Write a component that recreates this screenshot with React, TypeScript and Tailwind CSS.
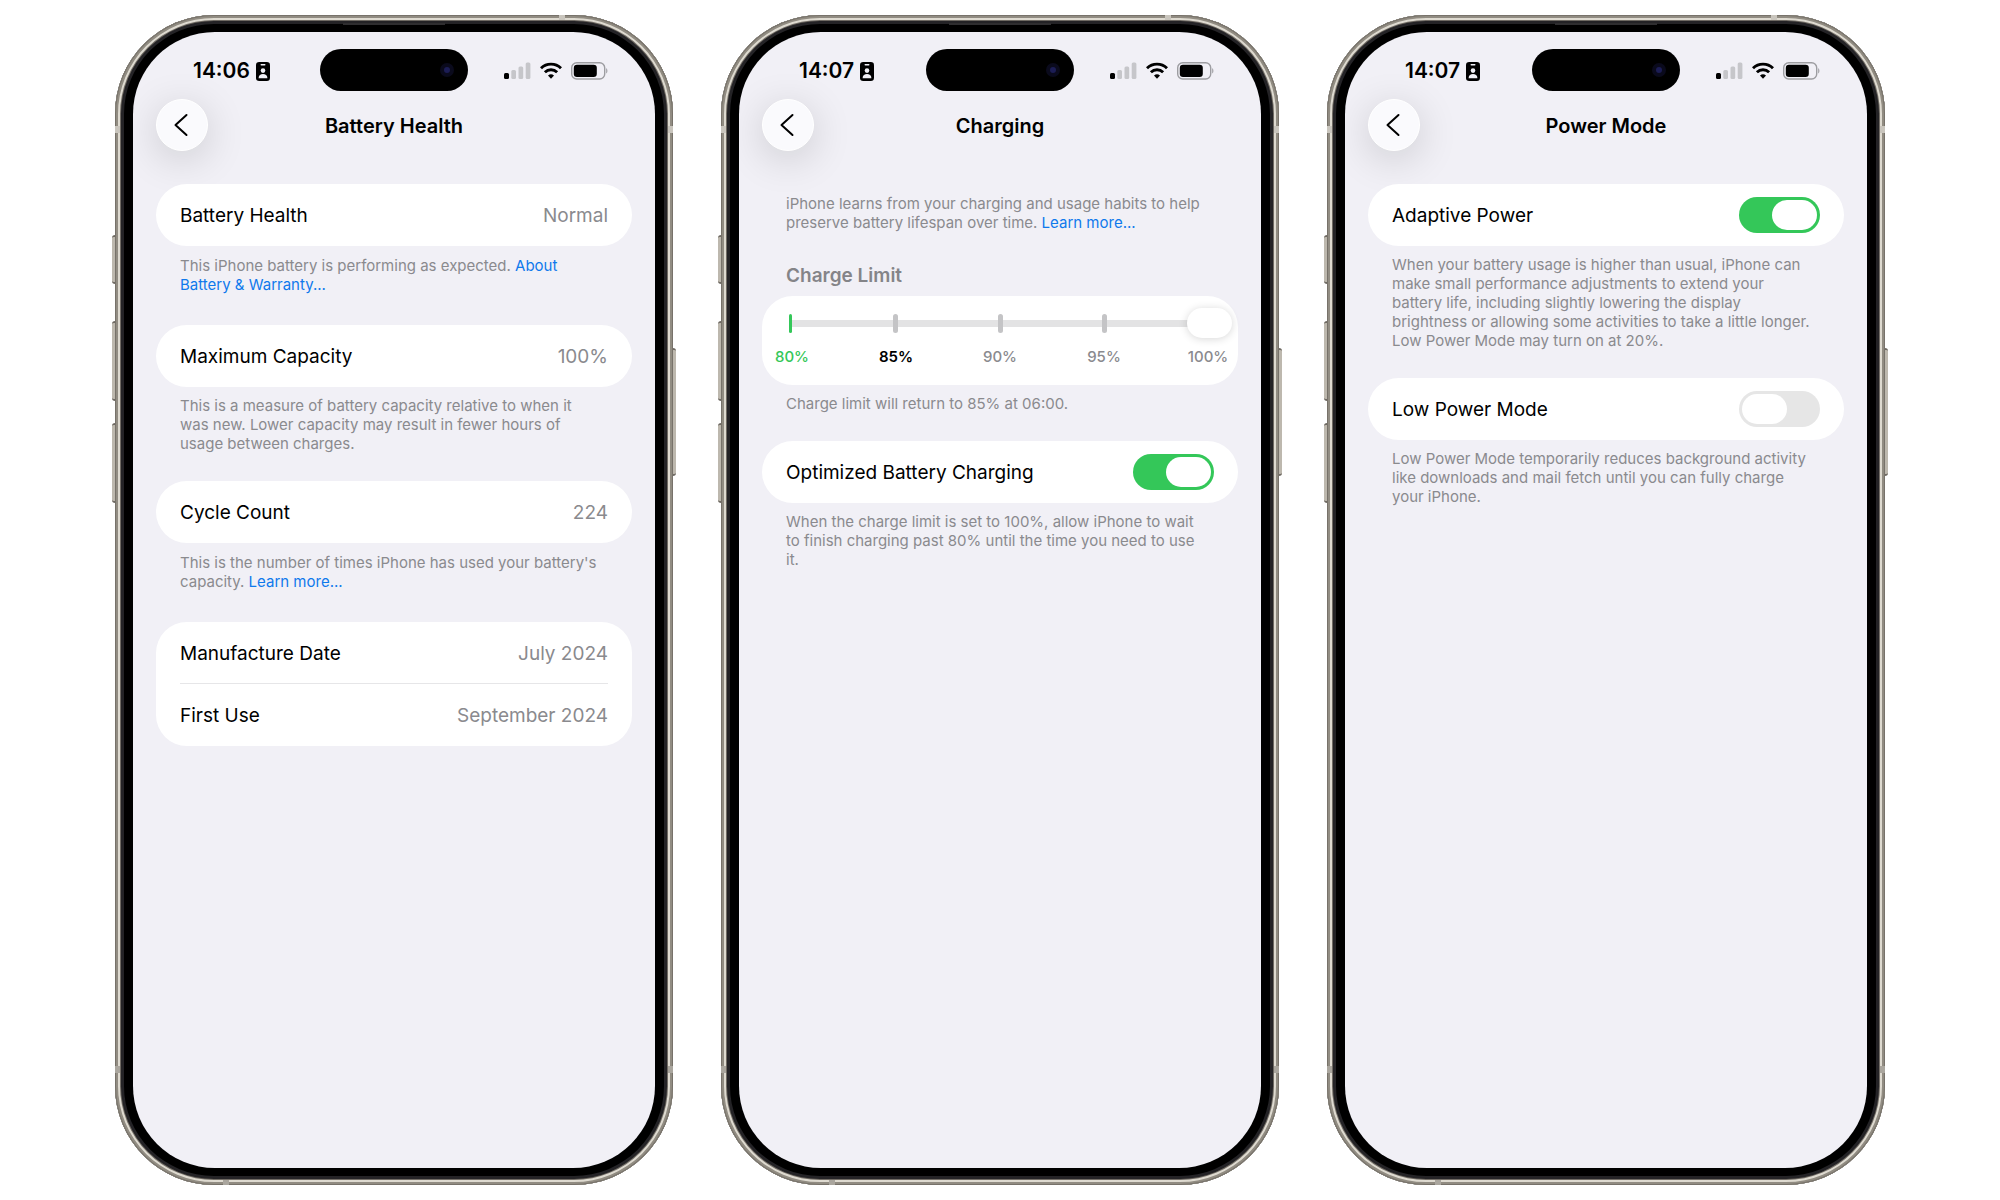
import { FC, ReactNode, useId, useState } from 'react';

const StatusBar: FC<{ time: string }> = ({ time }) => (
  <div className="mt-[17px] grid h-[42px] grid-cols-[1fr_148px_1fr] items-center">
    <div className="flex items-center gap-[6px] pt-[2px] pl-[60px]">
      <span className="text-[21px] leading-6 font-semibold">{time}</span>
      <svg width="14" height="19" viewBox="0 0 14 19" aria-hidden="true">
        <rect width="14" height="19" rx="3.2" fill="#000" />
        <rect x="4.5" y="2" width="5" height="1.6" rx="0.8" fill="#f1f0f6" />
        <circle cx="7" cy="8.6" r="2.3" fill="#f1f0f6" />
        <path d="M2.6 16.2c0-3 2-4.2 4.4-4.2s4.4 1.2 4.4 4.2z" fill="#f1f0f6" />
      </svg>
    </div>
    <div className="flex h-[42px] items-center justify-end rounded-full bg-black pr-[14px]">
      <span className="flex size-[14px] items-center justify-center rounded-full bg-[#0a0a1c]">
        <span className="size-[6px] rounded-full bg-[#1c1d55]" />
      </span>
    </div>
    <div className="flex items-center justify-end gap-[9px] pt-px pr-[47px]">
      <svg width="27" height="18" viewBox="0 0 27 18" aria-hidden="true">
        <rect x="0" y="11" width="5" height="6" rx="1.5" fill="#000" />
        <rect x="7.3" y="8" width="4.7" height="9" rx="1.5" fill="#c6c6ca" />
        <rect x="14.5" y="4.5" width="4.7" height="12.5" rx="1.5" fill="#c6c6ca" />
        <rect x="21.7" y="0.5" width="4.7" height="16.5" rx="1.5" fill="#c6c6ca" />
      </svg>
      <svg width="22" height="17" viewBox="0 0 22 17" fill="none" stroke="#000" strokeWidth="2.9" aria-hidden="true">
        <path d="M1 6.200a14.300 14.300 0 0 1 20 0" />
        <path d="M4.900 10.200a8.700 8.700 0 0 1 12.200 0" />
        <path d="M11 16.700l-3-3.100a4.300 4.300 0 0 1 6 0z" fill="#000" stroke="none" />
      </svg>
      <svg width="37" height="18" viewBox="0 0 37 18" aria-hidden="true">
        <rect x="0.7" y="0.7" width="33" height="16.3" rx="5" fill="none" stroke="#9d9da1" strokeWidth="1.4" />
        <rect x="2.8" y="2.8" width="23" height="12.1" rx="3.2" fill="#000" />
        <path d="M35.2 6.300c1.600.5 1.600 4.700 0 5.200z" fill="#9d9da1" />
      </svg>
    </div>
  </div>
);

const Phone: FC<{ time: string; title: string; children: ReactNode }> = ({ time, title, children }) => (
  <section className="relative flex rounded-[99px] bg-black px-[18px] py-[17px] shadow-[inset_0_0_0_1px_#77726a,inset_0_0_0_3px_#918c82,inset_0_0_0_5px_#dedad0,inset_0_0_0_6px_#6f6a63,inset_0_0_0_9px_#242326]">
    {/* side keys */}
    <span className="absolute top-[220px] -left-[3px] h-[49px] w-[3px] rounded-l-sm border-y-2 border-[#6f6a63] bg-[#bdb8ae]" />
    <span className="absolute top-[306px] -left-[3px] h-[80px] w-[3px] rounded-l-sm border-y-2 border-[#6f6a63] bg-[#bdb8ae]" />
    <span className="absolute top-[408px] -left-[3px] h-[80px] w-[3px] rounded-l-sm border-y-2 border-[#6f6a63] bg-[#bdb8ae]" />
    <span className="absolute top-[333px] -right-[3px] h-[128px] w-[3px] rounded-r-sm border-y-2 border-[#6f6a63] bg-[#bdb8ae]" />
    {/* antenna bands */}
    <span className="absolute top-[111px] left-0 h-[7px] w-[5px] bg-[#c9c5bd]" />
    <span className="absolute top-[111px] right-0 h-[7px] w-[5px] bg-[#c9c5bd]" />
    <span className="absolute bottom-[112px] left-0 h-[7px] w-[5px] bg-[#aaa69e]" />
    <span className="absolute right-0 bottom-[112px] h-[7px] w-[5px] bg-[#aaa69e]" />
    <span className="absolute top-0 right-[108px] h-[5px] w-[6px] bg-[#c9c5bd]" />
    <span className="absolute bottom-0 left-[108px] h-[5px] w-[6px] bg-[#aaa69e]" />
    {/* earpiece */}
    <span className="absolute inset-x-[228px] top-[8px] h-[2px] bg-[#2f2e30]" />

    <div className="flex w-full flex-col overflow-hidden rounded-[82px] bg-[#f1f0f6] text-black">
      <StatusBar time={time} />
      <header className="mx-[23px] mt-2 grid grid-cols-[52px_1fr_52px] items-center">
        <button
          type="button"
          aria-label="Back"
          className="flex size-[52px] items-center justify-center rounded-full border border-white bg-[#fafafd] pr-[3px] shadow-[0_8px_40px_rgba(0,0,0,0.16)]"
        >
          <svg width="14" height="24" viewBox="0 0 14 24" fill="none" stroke="#000" strokeWidth="2" strokeLinecap="round" strokeLinejoin="round" aria-hidden="true">
            <path d="M12.500 2L1.500 12l11 10" />
          </svg>
        </button>
        <h1 className="pt-[2px] text-center text-[20px] leading-6 font-semibold">{title}</h1>
      </header>
      <div className="mx-[23px] mt-[33px]">{children}</div>
    </div>
  </section>
);

const Card: FC<{ children: ReactNode }> = ({ children }) => (
  <div className="rounded-[31px] bg-white px-6">{children}</div>
);

const Row: FC<{ label: string; value: string }> = ({ label, value }) => (
  <div className="flex h-[62px] items-center justify-between pt-[2px] text-[19px] leading-6">
    <span>{label}</span>
    <span className="text-[#8a8a8e]">{value}</span>
  </div>
);

const SwitchRow: FC<{ label: string; on?: boolean }> = ({ label, on = false }) => {
  const id = useId();
  const [checked, setChecked] = useState(on);

  return (
    <div className="flex h-[62px] items-center justify-between">
      <label htmlFor={id} className="pt-[2px] text-[19px] leading-6">
        {label}
      </label>
      <input
        id={id}
        type="checkbox"
        role="switch"
        checked={checked}
        onChange={(e) => setChecked(e.target.checked)}
        className="h-[36px] w-[81px] appearance-none rounded-full bg-[#e6e6e6] p-[3px] before:block before:h-[30px] before:w-[45px] before:rounded-full before:bg-white checked:bg-[#34c759] checked:before:translate-x-[30px]"
      />
    </div>
  );
};

const Note: FC<{ children: ReactNode }> = ({ children }) => (
  <p className="px-6 pt-[9px] pb-7 text-[15px] leading-[19px] text-[#8a8a8e]">{children}</p>
);

const LinkNote: FC<{ children: ReactNode }> = ({ children }) => (
  <p className="px-6 pt-[10px] pb-[31px] text-[15px] leading-[19px] text-[#8a8a8e]">{children}</p>
);

const Link: FC<{ children: ReactNode }> = ({ children }) => (
  <a href="#" className="text-[#0f79ec]">
    {children}
  </a>
);

const LIMITS = [
  { value: 80, color: 'text-[#34c759] font-medium' },
  { value: 85, color: 'text-black font-semibold' },
  { value: 90, color: 'text-[#8a8a8e] font-medium' },
  { value: 95, color: 'text-[#8a8a8e] font-medium' },
  { value: 100, color: 'text-[#8a8a8e] font-medium' },
];

const ChargeLimit: FC = () => {
  const [limit, setLimit] = useState(100);

  return (
    <div className="rounded-[31px] bg-white px-[6px] pt-[12px] pb-[19px]">
      <div className="grid items-center">
        <div className="col-start-1 row-start-1 mr-[20px] ml-[22px] h-[7px] bg-[#e3e3e4]" />
        <div className="col-start-1 row-start-1 mr-[20px] ml-[20px] flex justify-between">
          {LIMITS.map(({ value }) => (
            <span key={value} className="flex h-[19px] w-[5px] justify-center">
              <span className={value === 80 ? 'w-[3px] rounded-full bg-[#34c759]' : 'w-[5px] rounded-full bg-[#c4c4c6]'} />
            </span>
          ))}
        </div>
        <input
          type="range"
          aria-label="Charge Limit"
          min={80}
          max={100}
          step={5}
          value={limit}
          onChange={(e) => setLimit(Number(e.target.value))}
          className="col-start-1 row-start-1 h-[30px] w-full appearance-none bg-transparent [&::-webkit-slider-thumb]:h-[30px] [&::-webkit-slider-thumb]:w-[45px] [&::-webkit-slider-thumb]:appearance-none [&::-webkit-slider-thumb]:rounded-full [&::-webkit-slider-thumb]:bg-white [&::-webkit-slider-thumb]:shadow-[0_1px_9px_rgba(0,0,0,0.16)]"
        />
      </div>
      <div className="mt-[9px] flex justify-between px-[1px]">
        {LIMITS.map(({ value, color }) => (
          <span key={value} className={`w-[46px] text-center text-[15px] leading-[19px] ${color}`}>
            {value}%
          </span>
        ))}
      </div>
    </div>
  );
};

export default function App() {
  return (
    <main className="grid min-h-screen grid-cols-3 gap-12 bg-white px-[115px] py-[15px] font-[Inter,'Liberation_Sans',sans-serif]">
      <Phone time="14:06" title="Battery Health">
        <Card>
          <Row label="Battery Health" value="Normal" />
        </Card>
        <LinkNote>
          This iPhone battery is performing as expected. <Link>About Battery &amp; Warranty...</Link>
        </LinkNote>
        <Card>
          <Row label="Maximum Capacity" value="100%" />
        </Card>
        <Note>
          This is a measure of battery capacity relative to when it
          <br />
          was new. Lower capacity may result in fewer hours of
          <br />
          usage between charges.
        </Note>
        <Card>
          <Row label="Cycle Count" value="224" />
        </Card>
        <LinkNote>
          This is the number of times iPhone has used your battery's capacity. <Link>Learn more...</Link>
        </LinkNote>
        <Card>
          <Row label="Manufacture Date" value="July 2024" />
          <hr className="-mt-px border-[#e6e6e8]" />
          <Row label="First Use" value="September 2024" />
        </Card>
      </Phone>

      <Phone time="14:07" title="Charging">
        <LinkNote>
          iPhone learns from your charging and usage habits to help preserve battery lifespan over time.{' '}
          <Link>Learn more...</Link>
        </LinkNote>
        <h2 className="mb-2 px-6 pt-px text-[19px] leading-6 font-semibold text-[#848488]">Charge Limit</h2>
        <ChargeLimit />
        <Note>Charge limit will return to 85% at 06:00.</Note>
        <Card>
          <SwitchRow label="Optimized Battery Charging" on />
        </Card>
        <Note>
          When the charge limit is set to 100%, allow iPhone to wait
          <br />
          to finish charging past 80% until the time you need to use
          <br />
          it.
        </Note>
      </Phone>

      <Phone time="14:07" title="Power Mode">
        <Card>
          <SwitchRow label="Adaptive Power" on />
        </Card>
        <Note>
          When your battery usage is higher than usual, iPhone can
          <br />
          make small performance adjustments to extend your
          <br />
          battery life, including slightly lowering the display
          <br />
          brightness or allowing some activities to take a little longer.
          <br />
          Low Power Mode may turn on at 20%.
        </Note>
        <Card>
          <SwitchRow label="Low Power Mode" />
        </Card>
        <Note>
          Low Power Mode temporarily reduces background activity
          <br />
          like downloads and mail fetch until you can fully charge
          <br />
          your iPhone.
        </Note>
      </Phone>
    </main>
  );
}
